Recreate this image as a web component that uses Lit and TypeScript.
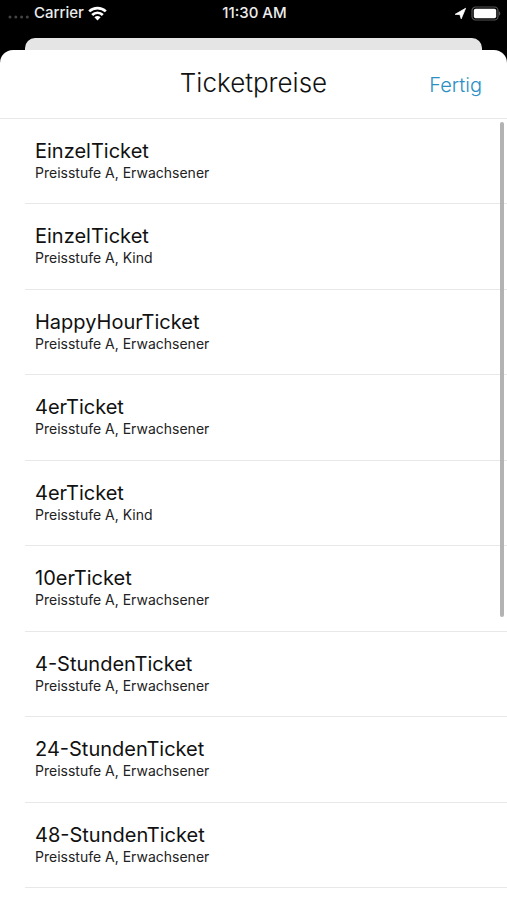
import { LitElement, html, css, svg } from "lit";
import { customElement, property } from "lit/decorators.js";

interface Ticket {
  name: string;
  detail: string;
}

const ADULT = "Preisstufe A, Erwachsener";
const CHILD = "Preisstufe A, Kind";

const TICKETS: Ticket[] = [
  { name: "EinzelTicket", detail: ADULT },
  { name: "EinzelTicket", detail: CHILD },
  { name: "HappyHourTicket", detail: ADULT },
  { name: "4erTicket", detail: ADULT },
  { name: "4erTicket", detail: CHILD },
  { name: "10erTicket", detail: ADULT },
  { name: "4-StundenTicket", detail: ADULT },
  { name: "24-StundenTicket", detail: ADULT },
  { name: "48-StundenTicket", detail: ADULT },
];

@customElement("status-bar")
export class StatusBar extends LitElement {
  static styles = css`
    :host {
      display: grid;
      grid-template-columns: 1fr auto 1fr;
      align-items: center;
      height: 26px;
      padding: 0 6px 0 8px;
      color: #ececec;
      font: 500 15px/20px Inter, "Liberation Sans", sans-serif;
    }
    .side {
      display: flex;
      align-items: center;
    }
    .right {
      justify-content: flex-end;
      gap: 4px;
    }
    .dots {
      margin: 8px 5px 0 0;
    }
    .wifi {
      margin-left: 4px;
    }
    svg {
      display: block;
    }
  `;

  render() {
    return html`
      <div class="side">
        <svg class="dots" width="21" height="4" viewBox="0 0 21 4" fill="#444" aria-hidden="true">
          ${[2, 7.8, 13.6, 19.3].map((x) => svg`<circle cx=${x} cy="2" r="1.5" />`)}
        </svg>
        <span>Carrier</span>
        <svg class="wifi" width="19" height="15" viewBox="0 0 19 15" aria-hidden="true">
          <g fill="none" stroke="#fff" stroke-width="2.7">
            <path d="M1.2 5.4C5.8 .9 13.2 .9 17.8 5.4" />
            <path d="M4.2 9C7.2 6 11.8 6 14.8 9" />
          </g>
          <path fill="#fff" d="M6.4 11.3C8.1 9.7 10.9 9.7 12.6 11.3L9.5 14.6Z" />
        </svg>
      </div>
      <span>11:30 AM</span>
      <div class="side right">
        <svg width="13" height="13" viewBox="0 0 13 13" aria-hidden="true">
          <path fill="#fff" stroke="#fff" stroke-width=".8" stroke-linejoin="round" d="M11.6 1.3L7.2 11.8L5.9 7.6L1.2 7.3Z" />
        </svg>
        <svg width="30" height="15" viewBox="0 0 30 15" aria-hidden="true">
          <rect x="1" y="1" width="26" height="13" rx="3.6" fill="none" stroke="#555" stroke-width="1.2" />
          <rect x="2.8" y="2.8" width="22.4" height="9.4" rx="1.8" fill="#fff" />
          <path fill="#555" d="M28 5.3C29.8 6 29.8 9 28 9.7Z" />
        </svg>
      </div>
    `;
  }
}

@customElement("ticket-list")
export class TicketList extends LitElement {
  @property({ attribute: false }) tickets: Ticket[] = [];

  static styles = css`
    :host {
      display: block;
      position: relative;
    }
    ul {
      margin: 0;
      padding: 0 0 0 25px;
      list-style: none;
    }
    li {
      box-sizing: border-box;
      min-height: 85px;
      padding: 19px 10px;
      border-bottom: 1px solid #e8e8e8;
    }
    li:nth-child(even) {
      min-height: 86px;
    }
    .name {
      color: #111;
      font-size: 20px;
      line-height: 26px;
    }
    .detail {
      color: #222;
      font-size: 14px;
      line-height: 18px;
    }
    .thumb {
      position: absolute;
      top: 3px;
      right: 3px;
      width: 4px;
      height: 63.4%;
      border-radius: 2px;
      background: #b3b3b3;
    }
  `;

  render() {
    return html`
      <ul>
        ${this.tickets.map(
          (t) => html`<li>
            <div class="name">${t.name}</div>
            <div class="detail">${t.detail}</div>
          </li>`
        )}
      </ul>
      <div class="thumb"></div>
    `;
  }
}

@customElement("app-root")
export class AppRoot extends LitElement {
  static styles = css`
    :host {
      display: flex;
      flex-direction: column;
      min-height: 100vh;
      background: #000;
      font-family: Inter, "Liberation Sans", sans-serif;
    }
    .behind {
      height: 12px;
      margin: 12px 25px 0;
      border-radius: 10px 10px 0 0;
      background: #e5e5e5;
    }
    .sheet {
      display: flex;
      flex-direction: column;
      flex: 1;
      border-radius: 13px 13px 0 0;
      background: #fff;
    }
    header {
      display: grid;
      grid-template-columns: 1fr auto 1fr;
      align-items: center;
      height: 68px;
      padding: 0 25px;
      border-bottom: 1px solid #e8e8e8;
    }
    h1 {
      grid-column: 2;
      margin: 0;
      padding-bottom: 3px;
      color: #111;
      font-size: 26px;
      font-weight: 300;
      line-height: 32px;
    }
    button {
      justify-self: end;
      margin: 0;
      padding: 2px 0 0;
      border: 0;
      background: none;
      color: #2b8fc4;
      font: 300 20px/24px Inter, "Liberation Sans", sans-serif;
      cursor: pointer;
    }
    ticket-list {
      flex: 1;
    }
  `;

  render() {
    return html`
      <status-bar></status-bar>
      <div class="behind"></div>
      <main class="sheet">
        <header>
          <h1>Ticketpreise</h1>
          <button type="button">Fertig</button>
        </header>
        <ticket-list .tickets=${TICKETS}></ticket-list>
      </main>
    `;
  }
}
